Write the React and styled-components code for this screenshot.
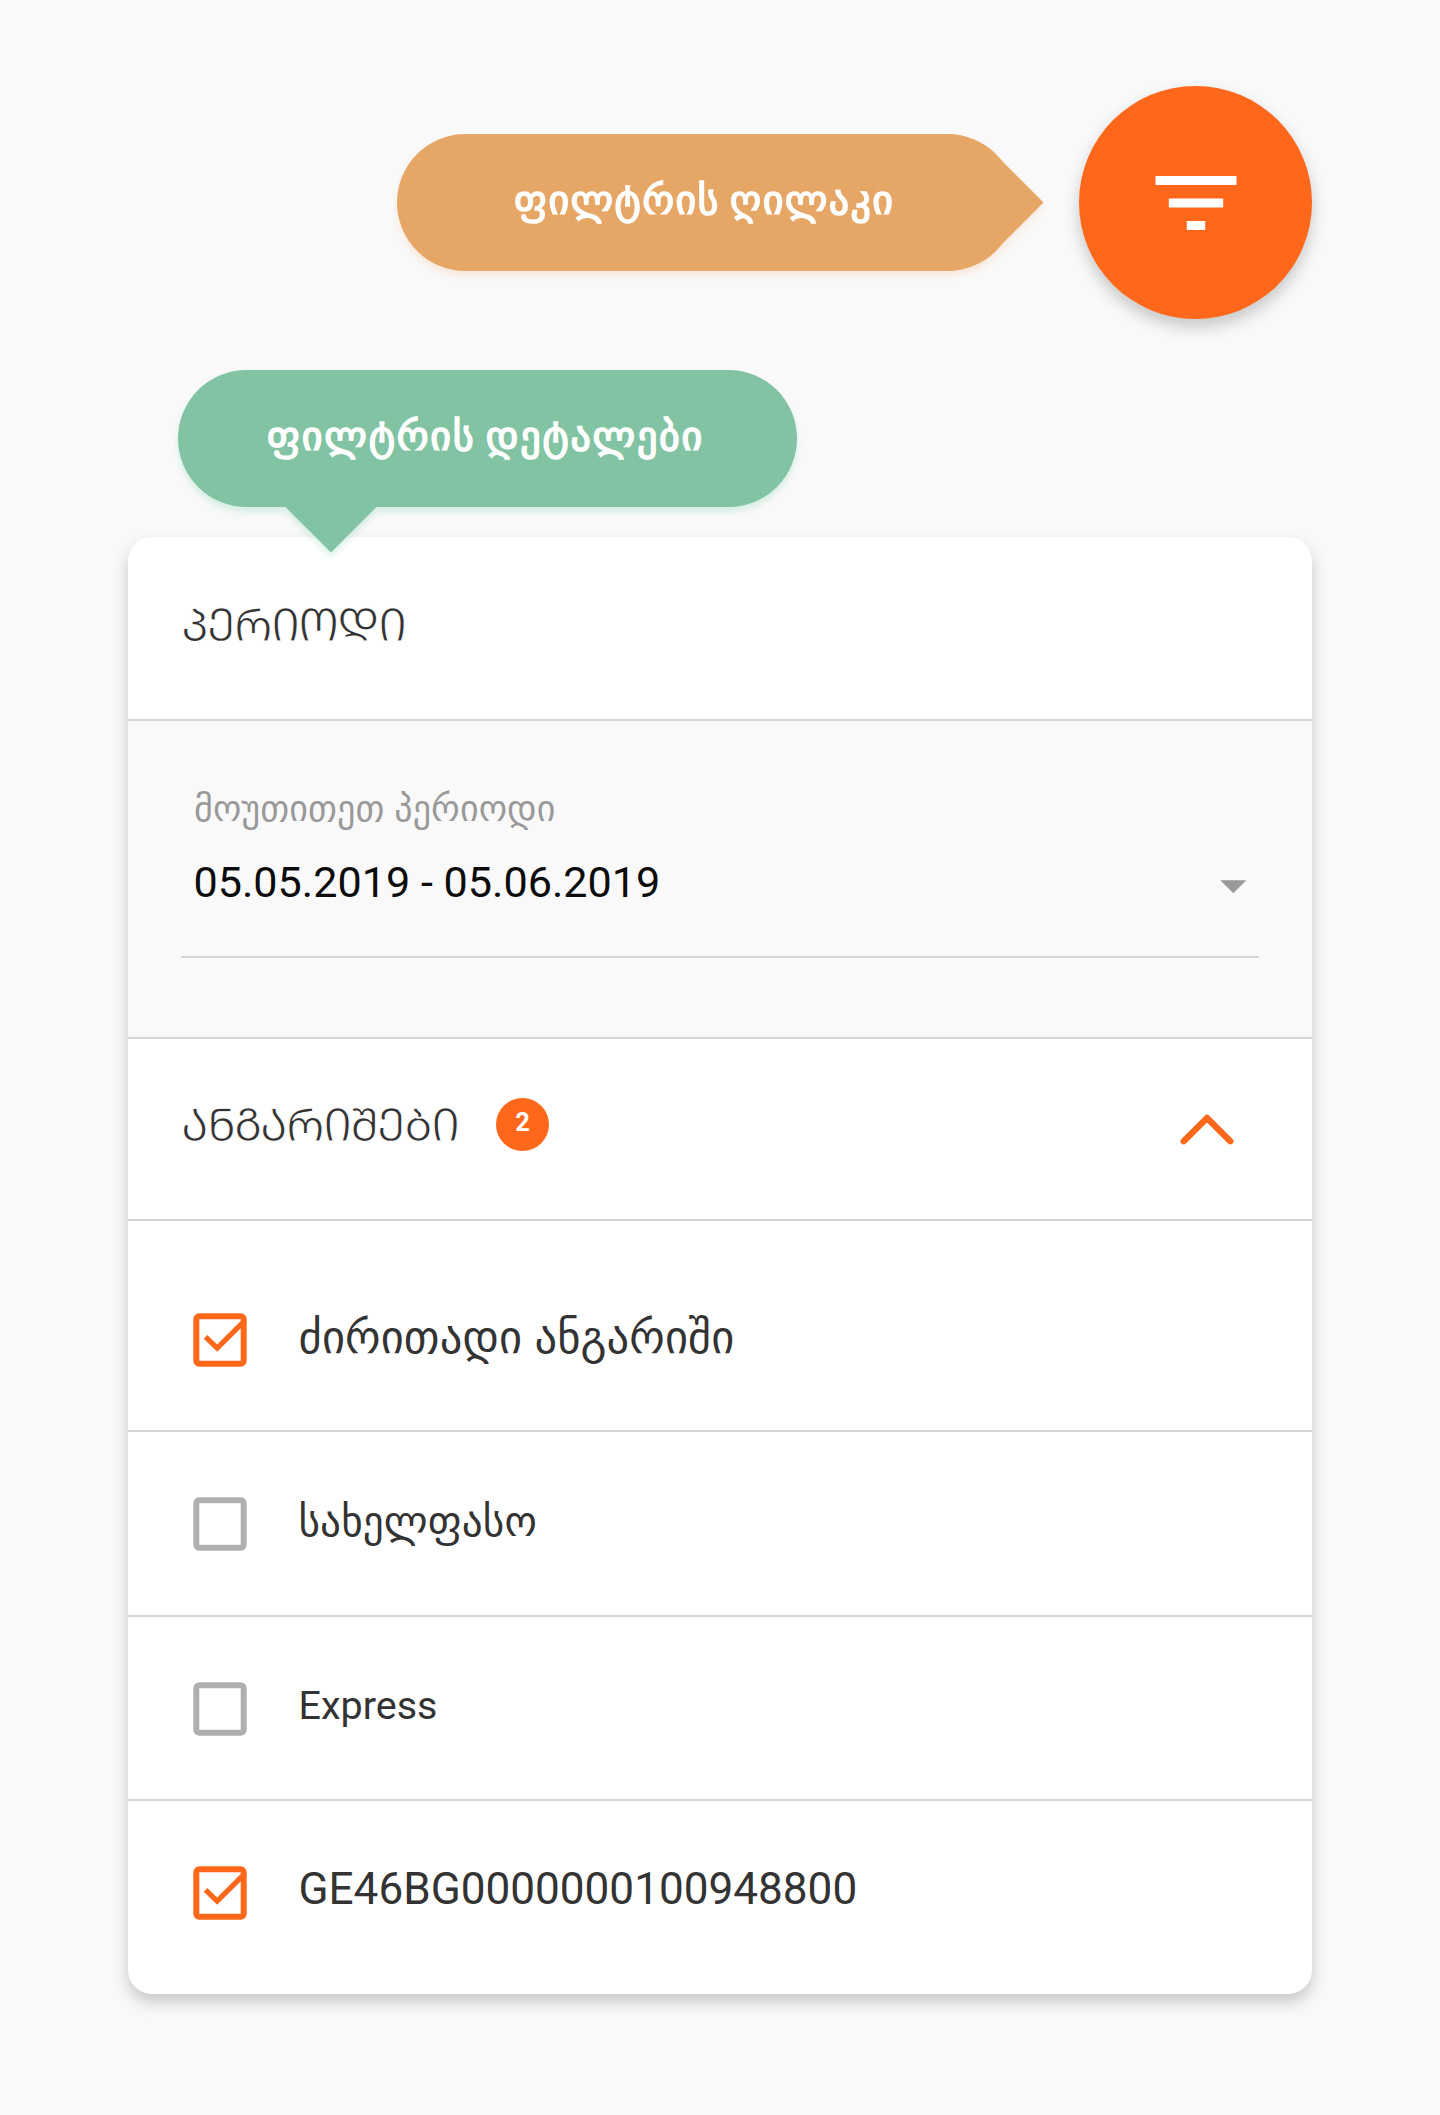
import React, { useState } from "react";
import styled, { createGlobalStyle } from "styled-components";

const GEORGIAN = '"DejaVu Sans", "Noto Sans", sans-serif';
const LATIN = 'Roboto, "DejaVu Sans", sans-serif';
const ORANGE = "#ff681a";
const LINE = "#d6d6d6";

const GlobalStyle = createGlobalStyle`
  * { box-sizing: border-box; }
  body { margin: 0; background: #f9f9f9; }
`;

const Page = styled.main`
  width: 1440px;
  height: 2115px;
  padding: 86px 128px 0;
  display: flex;
  flex-direction: column;
  background: #f9f9f9;
  font-family: ${GEORGIAN};
  color: #333;
  overflow: hidden;
`;

const ActionRow = styled.div`
  display: flex;
  justify-content: flex-end;
  align-items: flex-start;
  gap: 63px;
  height: 284px;
`;

const Callout = styled.div`
  position: relative;
  flex: none;
  width: 619px;
  height: 137px;
  padding: 36px 0 0 ${(p) => p.$inset}px;
  border-radius: 69px;
  background: ${(p) => p.$color};
  color: #fff;
  font-size: 40px;
  line-height: 60px;
  letter-spacing: ${(p) => p.$tracking}px;
  word-spacing: -4.2px;
  white-space: nowrap;
  -webkit-text-stroke: 1.6px #fff;
  filter: drop-shadow(0 5px 3px ${(p) => p.$shadow});

  &::after {
    content: "";
    position: absolute;
    background: ${(p) => p.$color};
  }
`;

const ButtonCallout = styled(Callout)`
  margin-top: 48px;

  &::after {
    top: 20px;
    left: 598px;
    width: 48.5px;
    height: 97px;
    clip-path: polygon(0 0, 100% 50%, 0 100%);
  }
`;

const DetailsCallout = styled(Callout)`
  z-index: 1;
  margin-left: 50px;

  &::after {
    top: 136.5px;
    left: 107px;
    width: 92px;
    height: 46px;
    clip-path: polygon(0 0, 100% 0, 50% 100%);
  }
`;

const FilterButton = styled.button`
  display: flex;
  align-items: center;
  justify-content: center;
  flex: none;
  width: 233px;
  height: 233px;
  padding: 0;
  border: 0;
  border-radius: 50%;
  background: ${ORANGE};
  box-shadow: 0 8px 16px rgba(0, 0, 0, 0.2);
`;

const Card = styled.section`
  display: flex;
  flex-direction: column;
  height: 1457px;
  margin-top: 30px;
  border-radius: 24px;
  background: #fff;
  box-shadow: 0 8px 16px rgba(0, 0, 0, 0.2);
  overflow: hidden;
`;

const SectionHeader = styled.header`
  display: flex;
  align-items: flex-start;
  flex: none;
  height: ${(p) => p.$height}px;
  padding: ${(p) => p.$top}px 77px 0 52.5px;
  border-bottom: 2px solid ${LINE};
`;

const Title = styled.h2`
  margin: -1px 0 0;
  font-size: 46px;
  font-weight: 400;
  line-height: 60px;
  letter-spacing: -1.95px;
  -webkit-text-stroke: 1.1px #fff;
`;

const Badge = styled.span`
  display: flex;
  justify-content: center;
  width: 53px;
  height: 53px;
  margin: 2px auto 0 38px;
  border-radius: 50%;
  background: ${ORANGE};
  color: #fff;
  font: 700 25.5px/49px ${LATIN};
`;

const Chevron = styled.svg`
  flex: none;
  margin-top: 13px;
`;

const PeriodPanel = styled.div`
  flex: none;
  height: 318px;
  padding: 58px 53px 0;
  background: #f9f9f9;
  border-bottom: 2px solid ${LINE};
`;

const PeriodField = styled.div`
  height: 179px;
  padding: 0 12.5px;
  border-bottom: 2px solid ${LINE};
`;

const FieldLabel = styled.div`
  padding-left: 0.5px;
  color: #999;
  font-size: 36.1px;
  line-height: 60px;
  letter-spacing: 0.08px;
  word-spacing: -1.6px;
  white-space: nowrap;
`;

const FieldValue = styled.div`
  display: flex;
  justify-content: space-between;
  margin-top: 14px;
  color: #0c0c0c;
  font: 43.15px/60px ${LATIN};
  white-space: nowrap;
`;

const Caret = styled.svg`
  flex: none;
  margin-top: 27px;
`;

const AccountRow = styled.label`
  display: flex;
  align-items: flex-start;
  flex: none;
  height: ${(p) => p.$height}px;
  padding: ${(p) => p.$top}px 65px 0;
  border-bottom: ${(p) => (p.$last ? 0 : 2)}px solid ${LINE};
`;

const Box = styled.svg`
  flex: none;
  margin: 6.5px 51.5px 0 0;
`;

const AccountName = styled.span`
  padding-top: ${(p) => (p.$latin ? 0 : 1)}px;
  font-family: ${(p) => (p.$latin ? LATIN : GEORGIAN)};
  font-size: ${(p) => p.$size}px;
  line-height: 60px;
  letter-spacing: ${(p) => (p.$latin ? 0 : 0.1)}px;
  word-spacing: -2px;
  white-space: nowrap;
`;

function Checkbox({ checked }) {
  return (
    <Box width="54" height="54" viewBox="0 0 54 54" fill="none" stroke={checked ? ORANGE : "#afafaf"}>
      <rect x="3.3" y="3.3" width="47.4" height="47.4" rx="3" strokeWidth="6" />
      {checked && <path d="M12.5 23.8 L24.2 35.2 L50 9.4" strokeWidth="5.2" />}
    </Box>
  );
}

const ACCOUNTS = [
  { name: "ძირითადი ანგარიში", size: 44.6, height: 211, top: 85.5, checked: true },
  { name: "სახელფასო", size: 41.2, height: 185, top: 58.8 },
  { name: "Express", size: 39.5, height: 184, top: 58.5, latin: true },
  { name: "GE46BG0000000100948800", size: 44.1, height: 193, top: 58.2, latin: true, checked: true },
];

export default function App() {
  const [open, setOpen] = useState(true);
  return (
    <>
      <GlobalStyle />
      <Page>
        <ActionRow>
          <ButtonCallout $inset={117} $tracking={1.42} $color="#e6a666" $shadow="rgba(255, 150, 80, 0.16)">
            ფილტრის ღილაკი
          </ButtonCallout>
          <FilterButton aria-label="ფილტრი">
            <svg width="82" height="54" viewBox="0 0 82 54" fill="#fff">
              <rect x="0.5" y="0" width="81" height="9" />
              <rect x="13.8" y="22.5" width="54.4" height="9" />
              <rect x="31.8" y="45" width="18.4" height="9" />
            </svg>
          </FilterButton>
        </ActionRow>
        <DetailsCallout $inset={89} $tracking={1.8} $color="#81c3a3" $shadow="rgba(60, 190, 125, 0.18)">
          ფილტრის დეტალები
        </DetailsCallout>
        <Card>
          <SectionHeader $height={184} $top={58.5}>
            <Title>ᲞᲔᲠᲘᲝᲓᲘ</Title>
          </SectionHeader>
          <PeriodPanel>
            <PeriodField>
              <FieldLabel>მოუთითეთ პერიოდი</FieldLabel>
              <FieldValue>
                05.05.2019 - 05.06.2019
                <Caret width="27" height="14" viewBox="0 0 27 14" fill="#999">
                  <path d="M0.3 0.3H26.3L13.3 13.3Z" />
                </Caret>
              </FieldValue>
            </PeriodField>
          </PeriodPanel>
          <SectionHeader $height={182} $top={56.5} onClick={() => setOpen(!open)}>
            <Title>ᲐᲜᲒᲐᲠᲘᲨᲔᲑᲘ</Title>
            <Badge>2</Badge>
            <Chevron width="56" height="40" viewBox="0 0 56 40" fill="none" stroke={ORANGE} strokeWidth="6.4" strokeLinecap="round" strokeLinejoin="round">
              <path d="M4.7 32.2 L28 8.9 L51.3 32.2" />
            </Chevron>
          </SectionHeader>
          {open &&
            ACCOUNTS.map((a, i) => (
              <AccountRow key={a.name} $height={a.height} $top={a.top} $last={i === ACCOUNTS.length - 1}>
                <Checkbox checked={a.checked} />
                <AccountName $size={a.size} $latin={a.latin}>{a.name}</AccountName>
              </AccountRow>
            ))}
        </Card>
      </Page>
    </>
  );
}
